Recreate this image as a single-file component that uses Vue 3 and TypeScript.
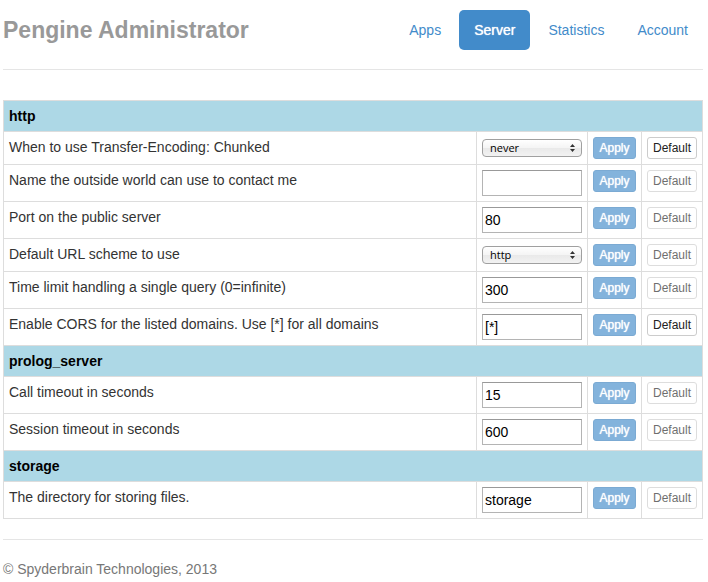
<script setup lang="ts">
import { reactive } from 'vue'

interface Setting {
  id: string
  label: string
  value: string
  options?: string[]
  changed?: boolean
}

interface Section {
  name: string
  settings: Setting[]
}

const links = ['Apps', 'Server', 'Statistics', 'Account']
const current = 'Server'

const sections = reactive<Section[]>([
  {
    name: 'http',
    settings: [
      { id: 'chunked', label: 'When to use Transfer-Encoding: Chunked', value: 'never', options: ['never', 'on_request', 'if_possible'], changed: true },
      { id: 'public-host', label: 'Name the outside world can use to contact me', value: '' },
      { id: 'public-port', label: 'Port on the public server', value: '80' },
      { id: 'public-scheme', label: 'Default URL scheme to use', value: 'http', options: ['http', 'https'] },
      { id: 'time-limit', label: 'Time limit handling a single query (0=infinite)', value: '300' },
      { id: 'cors', label: 'Enable CORS for the listed domains. Use [*] for all domains', value: '[*]', changed: true },
    ],
  },
  {
    name: 'prolog_server',
    settings: [
      { id: 'call-timeout', label: 'Call timeout in seconds', value: '15' },
      { id: 'session-timeout', label: 'Session timeout in seconds', value: '600' },
    ],
  },
  {
    name: 'storage',
    settings: [{ id: 'directory', label: 'The directory for storing files.', value: 'storage' }],
  },
])
</script>

<template>
  <div class="page">
    <header class="masthead">
      <h1>Pengine Administrator</h1>
      <nav>
        <a v-for="link in links" :key="link" :href="'#' + link.toLowerCase()" :class="{ active: link === current }">{{ link }}</a>
      </nav>
    </header>

    <table class="settings">
      <colgroup>
        <col />
        <col class="col-value" />
        <col class="col-apply" />
        <col class="col-default" />
      </colgroup>
      <tbody v-for="section in sections" :key="section.name">
        <tr>
          <th colspan="4" scope="rowgroup">{{ section.name }}</th>
        </tr>
        <tr v-for="s in section.settings" :key="s.id">
          <td><label :for="s.id">{{ s.label }}</label></td>
          <td>
            <div v-if="s.options" class="picker">
              <select :id="s.id" v-model="s.value">
                <option v-for="o in s.options" :key="o" :value="o">{{ o }}</option>
              </select>
              <svg viewBox="0 0 5 8" width="5" height="8" aria-hidden="true">
                <path d="M2.5 0 5 3H0zM0 5h5L2.5 8z" fill="#333" />
              </svg>
            </div>
            <input v-else :id="s.id" v-model="s.value" type="text" />
          </td>
          <td><button type="button" class="apply" disabled>Apply</button></td>
          <td><button type="button" class="default" :disabled="!s.changed">Default</button></td>
        </tr>
      </tbody>
    </table>

    <footer>© Spyderbrain Technologies, 2013</footer>
  </div>
</template>

<style>
body {
  margin: 0;
  background: #fff;
}
</style>

<style scoped>
.page,
.page * {
  box-sizing: border-box;
}

.page {
  padding: 10px 5px 0 3px;
  font: 14px/20px "Helvetica Neue", Helvetica, "Liberation Sans", Arial, sans-serif;
  color: #333;
}

.masthead {
  display: flex;
  justify-content: space-between;
  align-items: center;
  padding-bottom: 19px;
  border-bottom: 1px solid #e5e5e5;
}

h1 {
  margin: 0;
  font-size: 23px;
  line-height: 40px;
  font-weight: bold;
  color: #999;
}

nav {
  display: flex;
  gap: 3px;
}

nav a {
  padding: 10px 15px;
  border-radius: 5px;
  color: #428bca;
  text-decoration: none;
}

nav a.active {
  color: #fff;
  background: #428bca;
  text-shadow: 0 0 1px #fff;
}

.settings {
  width: 100%;
  margin: 30px 0 20px;
  table-layout: fixed;
  border-collapse: collapse;
}

.col-value {
  width: 111px;
}

.col-apply {
  width: 54px;
}

.col-default {
  width: 61px;
}

th,
td {
  padding: 5px;
  border: 1px solid #ddd;
  text-align: left;
  vertical-align: top;
}

th {
  background: #add8e6;
  color: #000;
}

input,
select,
button {
  display: block;
  width: 100%;
  margin: 0;
  font-family: inherit;
}

input {
  height: 26px;
  padding: 2px;
  border: 1px solid #b4b4b4;
  border-top-color: #999;
  border-radius: 0;
  background: #fff;
  color: #000;
  font-size: 14px;
}

.picker {
  position: relative;
  padding: 2px 0;
}

select {
  height: 18px;
  padding: 0 7px;
  appearance: none;
  border: 1px solid #a0a0a0;
  border-radius: 4px;
  background: linear-gradient(#fff, #f4f4f4 50%, #e9e9e9 50%, #f2f2f2);
  color: #000;
  font: 11px/16px "Lucida Grande", "Open Sans", sans-serif;
}

.picker svg {
  position: absolute;
  top: 7px;
  right: 7px;
  pointer-events: none;
}

button {
  height: 22px;
  padding: 0;
  border: 1px solid #ccc;
  border-radius: 3px;
  background: #fff;
  color: #222;
  font-size: 12px;
  line-height: 18px;
}

button:disabled {
  opacity: 0.65;
}

.apply {
  border-color: #357ebd;
  background: #428bca;
  color: #fff;
  text-shadow: 0 0 1px #fff;
}

footer {
  padding-top: 19px;
  border-top: 1px solid #e5e5e5;
  color: #777;
}
</style>
